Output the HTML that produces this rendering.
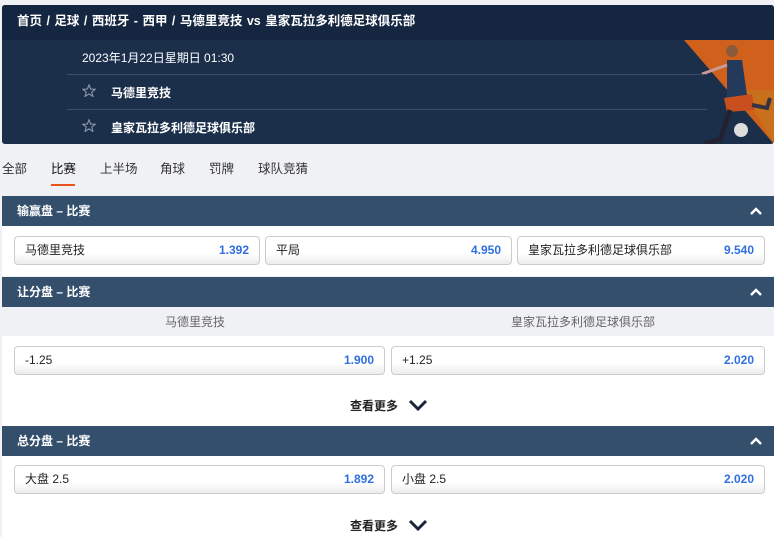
<!DOCTYPE html>
<html><head><meta charset="utf-8"><style>
*{margin:0;padding:0;box-sizing:border-box}
body{width:774px;height:537px;overflow:hidden;background:#f0f1f5;font-family:"Liberation Sans","Noto Sans CJK SC",sans-serif;font-size:12px;color:#222;position:relative}
.abs{position:absolute}
.hdr{left:2px;top:5px;width:772px;height:139px;background:#1b2f4b;border-radius:3px;overflow:hidden}
.bc{left:0;top:0;width:772px;height:35px;background:#142640;color:#fff;font-weight:bold;font-size:12.5px;line-height:32px;padding-left:15px;word-spacing:1px}
.line{left:65px;height:1px;background:#3b4f6b;width:640px}
.wt{color:#fff;font-size:12px}
.tab{top:158px;font-size:12.5px;color:#333}
.sh{left:2px;width:772px;height:30px;background:#344f6c;color:#fff;font-weight:bold;font-size:12px;line-height:30px;padding-left:15px}
.chev{right:12px;top:9px;width:12px;height:12px}
.wr{left:2px;width:772px;background:#fff}
.btn{height:29px;border:1px solid #ccc;border-radius:4px;background:linear-gradient(#fff 60%,#ececec);font-size:12px;line-height:27px;padding:0 10px}
.btn b{float:right;color:#2f6fe0;font-weight:bold}
.more{font-size:12px;font-weight:bold;color:#222}
</style></head><body>
<div class="abs hdr">
 <div class="abs bc">首页 / 足球 / 西班牙 - 西甲 / 马德里竞技 vs 皇家瓦拉多利德足球俱乐部</div>
 <svg class="abs" style="left:600px;top:35px" width="172" height="104"><polygon points="82,0 172,0 172,104" fill="#d0611c"/><polygon points="140,50 172,50 172,104" fill="#c57a1e" opacity=".6"/>
 <circle cx="130" cy="11" r="6" fill="#8a5a3a"/><path d="M125 20 L140 20 L145 55 L125 58 Z" fill="#233a5c"/><path d="M122 58 L150 54 L153 70 L125 72 Z" fill="#c8501e"/><path d="M100 34 L125 25" stroke="#c99" stroke-width="3"/><path d="M128 70 L118 100 L103 103" stroke="#223" stroke-width="5" fill="none"/><path d="M150 65 L165 68 L168 58" stroke="#334" stroke-width="4" fill="none"/><circle cx="139" cy="90" r="7" fill="#ddd"/></svg>
 <div class="abs wt" style="left:80px;top:44px">2023年1月22日星期日 01:30</div>
 <div class="abs line" style="top:69px"></div>
 <svg class="abs" style="left:80px;top:79px" width="14" height="13" viewBox="0 0 24 23"><path d="M12 1.5 L15 9 L23 9.3 L16.8 14.3 L19 22 L12 17.6 L5 22 L7.2 14.3 L1 9.3 L9 9 Z" fill="none" stroke="#8a96a8" stroke-width="2"/></svg>
 <div class="abs wt" style="left:109px;top:79px;font-weight:bold">马德里竞技</div>
 <div class="abs line" style="top:104px"></div>
 <svg class="abs" style="left:80px;top:114px" width="14" height="13" viewBox="0 0 24 23"><path d="M12 1.5 L15 9 L23 9.3 L16.8 14.3 L19 22 L12 17.6 L5 22 L7.2 14.3 L1 9.3 L9 9 Z" fill="none" stroke="#8a96a8" stroke-width="2"/></svg>
 <div class="abs wt" style="left:109px;top:114px;font-weight:bold">皇家瓦拉多利德足球俱乐部</div>
</div>
<div class="abs tab" style="left:2px">全部</div>
<div class="abs tab" style="left:51px;color:#111">比赛</div>
<div class="abs" style="left:51px;top:184px;width:24px;height:2px;background:#e8541a"></div>
<div class="abs tab" style="left:100px">上半场</div>
<div class="abs tab" style="left:160px">角球</div>
<div class="abs tab" style="left:209px">罚牌</div>
<div class="abs tab" style="left:258px">球队竞猜</div>

<div class="abs sh" style="top:196px">输赢盘 – 比赛<svg class="abs chev" viewBox="0 0 12 12"><path d="M1 9 L6 4 L11 9" stroke="#fff" stroke-width="2.4" fill="none"/></svg></div>
<div class="abs wr" style="top:226px;height:50px"></div>
<div class="abs btn" style="left:14px;top:236px;width:246px">马德里竞技<b>1.392</b></div>
<div class="abs btn" style="left:265px;top:236px;width:247px">平局<b>4.950</b></div>
<div class="abs btn" style="left:517px;top:236px;width:248px">皇家瓦拉多利德足球俱乐部<b>9.540</b></div>

<div class="abs sh" style="top:277px">让分盘 – 比赛<svg class="abs chev" viewBox="0 0 12 12"><path d="M1 9 L6 4 L11 9" stroke="#fff" stroke-width="2.4" fill="none"/></svg></div>
<div class="abs" style="left:165px;top:313px;color:#666">马德里竞技</div>
<div class="abs" style="left:511px;top:313px;color:#666">皇家瓦拉多利德足球俱乐部</div>
<div class="abs wr" style="top:336px;height:90px"></div>
<div class="abs btn" style="left:14px;top:346px;width:371px">-1.25<b>1.900</b></div>
<div class="abs btn" style="left:391px;top:346px;width:374px">+1.25<b>2.020</b></div>
<div class="abs more" style="left:350px;top:397px">查看更多</div>
<svg class="abs" style="left:408px;top:398px" width="20" height="14"><path d="M2 3 L10 11 L18 3" stroke="#1a2638" stroke-width="3" fill="none"/></svg>

<div class="abs sh" style="top:426px">总分盘 – 比赛<svg class="abs chev" viewBox="0 0 12 12"><path d="M1 9 L6 4 L11 9" stroke="#fff" stroke-width="2.4" fill="none"/></svg></div>
<div class="abs wr" style="top:456px;height:81px"></div>
<div class="abs btn" style="left:14px;top:465px;width:371px">大盘 2.5<b>1.892</b></div>
<div class="abs btn" style="left:391px;top:465px;width:374px">小盘 2.5<b>2.020</b></div>
<div class="abs more" style="left:350px;top:517px">查看更多</div>
<svg class="abs" style="left:408px;top:518px" width="20" height="14"><path d="M2 3 L10 11 L18 3" stroke="#1a2638" stroke-width="3" fill="none"/></svg>
</body></html>
